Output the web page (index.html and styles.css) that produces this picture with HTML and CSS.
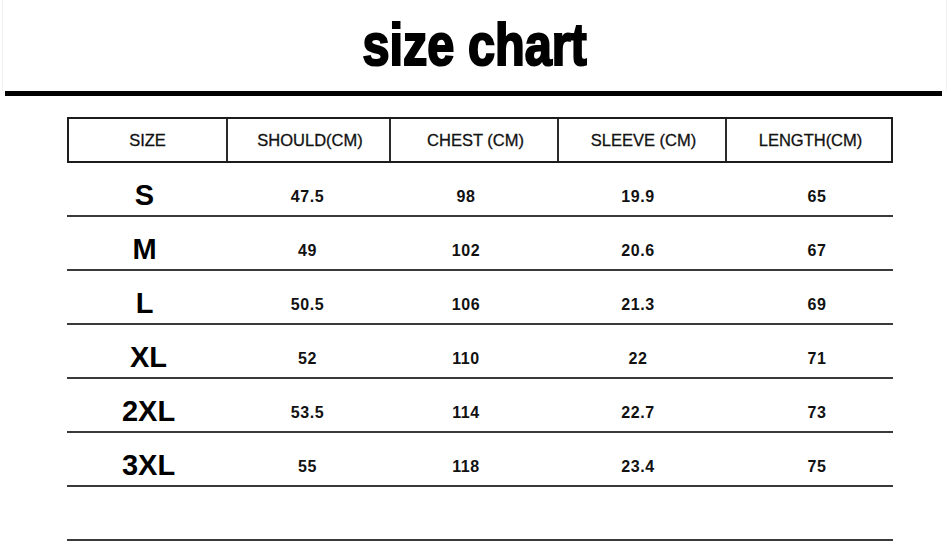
FILE: index.html
```html
<!DOCTYPE html>
<html>
<head>
<meta charset="utf-8">
<link rel="stylesheet" href="styles.css">
</head>
<body>
<header class="top">
  <h1 class="title"><span>size chart</span></h1>
</header>
<div class="rule"></div>
<section class="chart">
  <div class="head">
    <div class="hc">SIZE</div>
    <div class="hc">SHOULD(CM)</div>
    <div class="hc">CHEST (CM)</div>
    <div class="hc">SLEEVE (CM)</div>
    <div class="hc">LENGTH(CM)</div>
  </div>
  <div class="row"><div class="sz">S</div><div class="v c2">47.5</div><div class="v c3">98</div><div class="v c4">19.9</div><div class="v c5">65</div></div>
  <div class="row"><div class="sz">M</div><div class="v c2">49</div><div class="v c3">102</div><div class="v c4">20.6</div><div class="v c5">67</div></div>
  <div class="row"><div class="sz">L</div><div class="v c2">50.5</div><div class="v c3">106</div><div class="v c4">21.3</div><div class="v c5">69</div></div>
  <div class="row"><div class="sz wide">XL</div><div class="v c2">52</div><div class="v c3">110</div><div class="v c4">22</div><div class="v c5">71</div></div>
  <div class="row"><div class="sz wide">2XL</div><div class="v c2">53.5</div><div class="v c3">114</div><div class="v c4">22.7</div><div class="v c5">73</div></div>
  <div class="row"><div class="sz wide">3XL</div><div class="v c2">55</div><div class="v c3">118</div><div class="v c4">23.4</div><div class="v c5">75</div></div>
  <div class="row empty"></div>
</section>
</body>
</html>
```
FILE: styles.css
```css
html, body {
  margin: 0;
  padding: 0;
  background: #fff;
}
body {
  width: 950px;
  height: 550px;
  overflow: hidden;
  font-family: "Liberation Sans", Arial, sans-serif;
  color: #111;
}
.top {
  height: 91px;
  box-sizing: border-box;
  margin: 0 3px 0 2px;
  padding-top: 15px;
  border-left: 1px solid #f1f1f1;
  border-right: 1px solid #f1f1f1;
}
.title {
  margin: 0;
  height: 68px;
  display: flex;
  justify-content: center;
  font-size: 64px;
  font-weight: bold;
  line-height: 1;
  color: #000;
}
.title span {
  display: inline-block;
  transform: scale(0.76, 0.92);
  transform-origin: center top;
  letter-spacing: 0;
  -webkit-text-stroke: 2.4px #000;
}
.rule {
  height: 5px;
  background: #000;
  margin: 0 8px 0 5px;
}
.chart {
  margin: 21px 0 0 67px;
  width: 826px;
}
.head {
  display: grid;
  grid-template-columns: 157px 163px 168px 168px 1fr;
  height: 46px;
  box-sizing: border-box;
  border: 2px solid #1c1c1c;
}
.hc {
  display: flex;
  align-items: center;
  justify-content: center;
  font-size: 16.5px;
  color: #111;
  padding-left: 3px;
  -webkit-text-stroke: 0.3px #111;
}
.hc + .hc {
  border-left: 2px solid #2a2a2a;
}
.hc:first-child { padding-left: 0; }
.row {
  display: grid;
  grid-template-columns: 159px 163px 168px 168px 1fr;
  height: 54px;
  box-sizing: border-box;
  border-bottom: 2px solid #3a3a3a;
}
.sz {
  text-align: center;
  font-size: 29px;
  line-height: 29px;
  font-weight: bold;
  padding-top: 18px;
  padding-right: 4px;
  color: #000;
}
.sz.wide { padding-right: 0; padding-left: 4px; }
.v {
  text-align: center;
  font-size: 16px;
  line-height: 16px;
  font-weight: bold;
  letter-spacing: 0.6px;
  padding-top: 26px;
  color: #111;
}
.c3 { padding-right: 14px; }
.c4 { padding-right: 6px; }
.c5 { padding-left: 16px; }
```
